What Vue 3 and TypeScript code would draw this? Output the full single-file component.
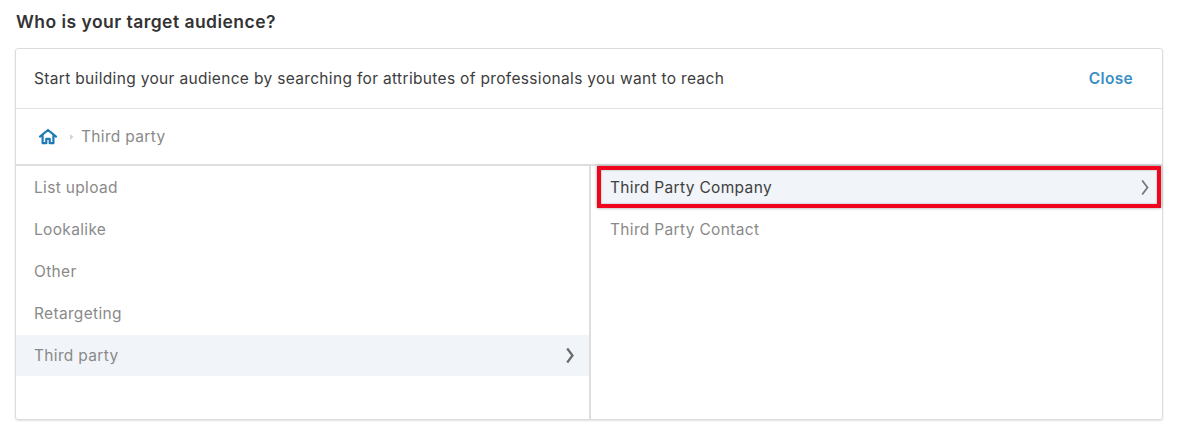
<script setup lang="ts">
const left = ['List upload', 'Lookalike', 'Other', 'Retargeting', 'Third party']
</script>

<template>
  <div class="page">
    <h1 class="title">Who is your target audience?</h1>
    <section class="card">
      <header class="head">
        <span>Start building your audience by searching for attributes of professionals you want to reach</span>
        <a class="close">Close</a>
      </header>
      <nav class="crumbs">
        <svg class="home" width="20" height="18" viewBox="0 0 20 18" aria-hidden="true">
          <path d="M2 8.600 10 2l8 6.600M4.600 7v8.200h3.700v-4.400h3.400v4.400h3.700V7" fill="none" stroke="#1f7ab5" stroke-width="2.200" stroke-linejoin="round" stroke-linecap="round" />
        </svg>
        <svg class="sep" width="6" height="10" viewBox="0 0 6 10" aria-hidden="true">
          <path d="M1 2l3.500 3L1 8z" fill="#d4d4d4" />
        </svg>
        <span>Third party</span>
      </nav>
      <div class="cols">
        <ul class="col col-left">
          <li v-for="name in left" :key="name" class="row" :class="{ active: name === 'Third party' }">
            <span>{{ name }}</span>
            <svg v-if="name === 'Third party'" class="chev" width="10" height="17" viewBox="0 0 10 17" aria-hidden="true">
              <path d="M2.200 1.500 7.500 8.500l-5.300 7" fill="none" stroke="#6a6a6a" stroke-width="2.200" />
            </svg>
          </li>
        </ul>
        <ul class="col col-right">
          <li class="row active marked">
            <span>Third Party Company</span>
            <svg class="chev" width="10" height="17" viewBox="0 0 10 17" aria-hidden="true">
              <path d="M2.200 1.500 7.500 8.500l-5.300 7" fill="none" stroke="#777" stroke-width="1.800" />
            </svg>
          </li>
          <li class="row"><span>Third Party Contact</span></li>
        </ul>
      </div>
    </section>
  </div>
</template>

<style scoped>
.page {
  width: 1177px;
  height: 435px;
  box-sizing: border-box;
  padding: 11px 14px 0 15px;
  background: #fff;
  font-family: Inter, "Liberation Sans", sans-serif;
  overflow: hidden;
}
.title {
  margin: 0 0 16px 1px;
  font-size: 17.5px;
  letter-spacing: 0.46px;
  line-height: 21px;
  font-weight: 600;
  color: #333;
}
.card {
  height: 372px;
  box-sizing: border-box;
  border: 1px solid #dcdcdc;
  border-radius: 3px;
  box-shadow: 0 1px 2px rgba(0, 0, 0, 0.12);
  display: flex;
  flex-direction: column;
}
.head {
  height: 60px;
  flex: none;
  box-sizing: border-box;
  display: flex;
  align-items: center;
  justify-content: space-between;
  padding: 0 29px 0 18px;
  border-bottom: 1px solid #e2e2e2;
  font-size: 15.5px;
  letter-spacing: 0.33px;
  color: #3d3d3d;
}
.close {
  font-weight: 600;
  color: #3a8fc4;
}
.crumbs {
  height: 57px;
  flex: none;
  box-sizing: border-box;
  display: flex;
  align-items: center;
  padding: 0 0 0 22px;
  border-bottom: 2px solid #dedede;
  font-size: 15.5px;
  letter-spacing: 0.33px;
  color: #8a8a8a;
}
.home {
  margin-right: 11px;
}
.sep {
  margin-right: 6px;
}
.cols {
  flex: 1;
  display: flex;
  min-height: 0;
}
.col {
  list-style: none;
  margin: 0;
  padding: 0;
}
.col-left {
  width: 575px;
  flex: none;
  padding-top: 1px;
  box-sizing: border-box;
  border-right: 2px solid #dedede;
}
.col-right {
  flex: 1;
  padding: 0 1px 0 6px;
}
.row {
  height: 42px;
  box-sizing: border-box;
  display: flex;
  align-items: center;
  justify-content: space-between;
  padding: 0 15px 0 18px;
  font-size: 15.5px;
  letter-spacing: 0.33px;
  color: #8a8a8a;
}
.col-left .row {
  height: 41.800px;
  padding-right: 14px;
}
.col-left .active {
  margin-top: 0.800px;
  height: 41px;
}
.col-right .row {
  padding: 0 9px 0 13px;
}
.active {
  background: #f1f4f8;
}
.marked {
  color: #404040;
  border: 4px solid #f0051e;
  box-shadow: 0 0 3px rgba(0, 0, 0, 0.4), inset 0 0 2px rgba(0, 0, 0, 0.35);
}
.col-right .marked {
  padding: 0 7px 0 9px;
}
</style>
